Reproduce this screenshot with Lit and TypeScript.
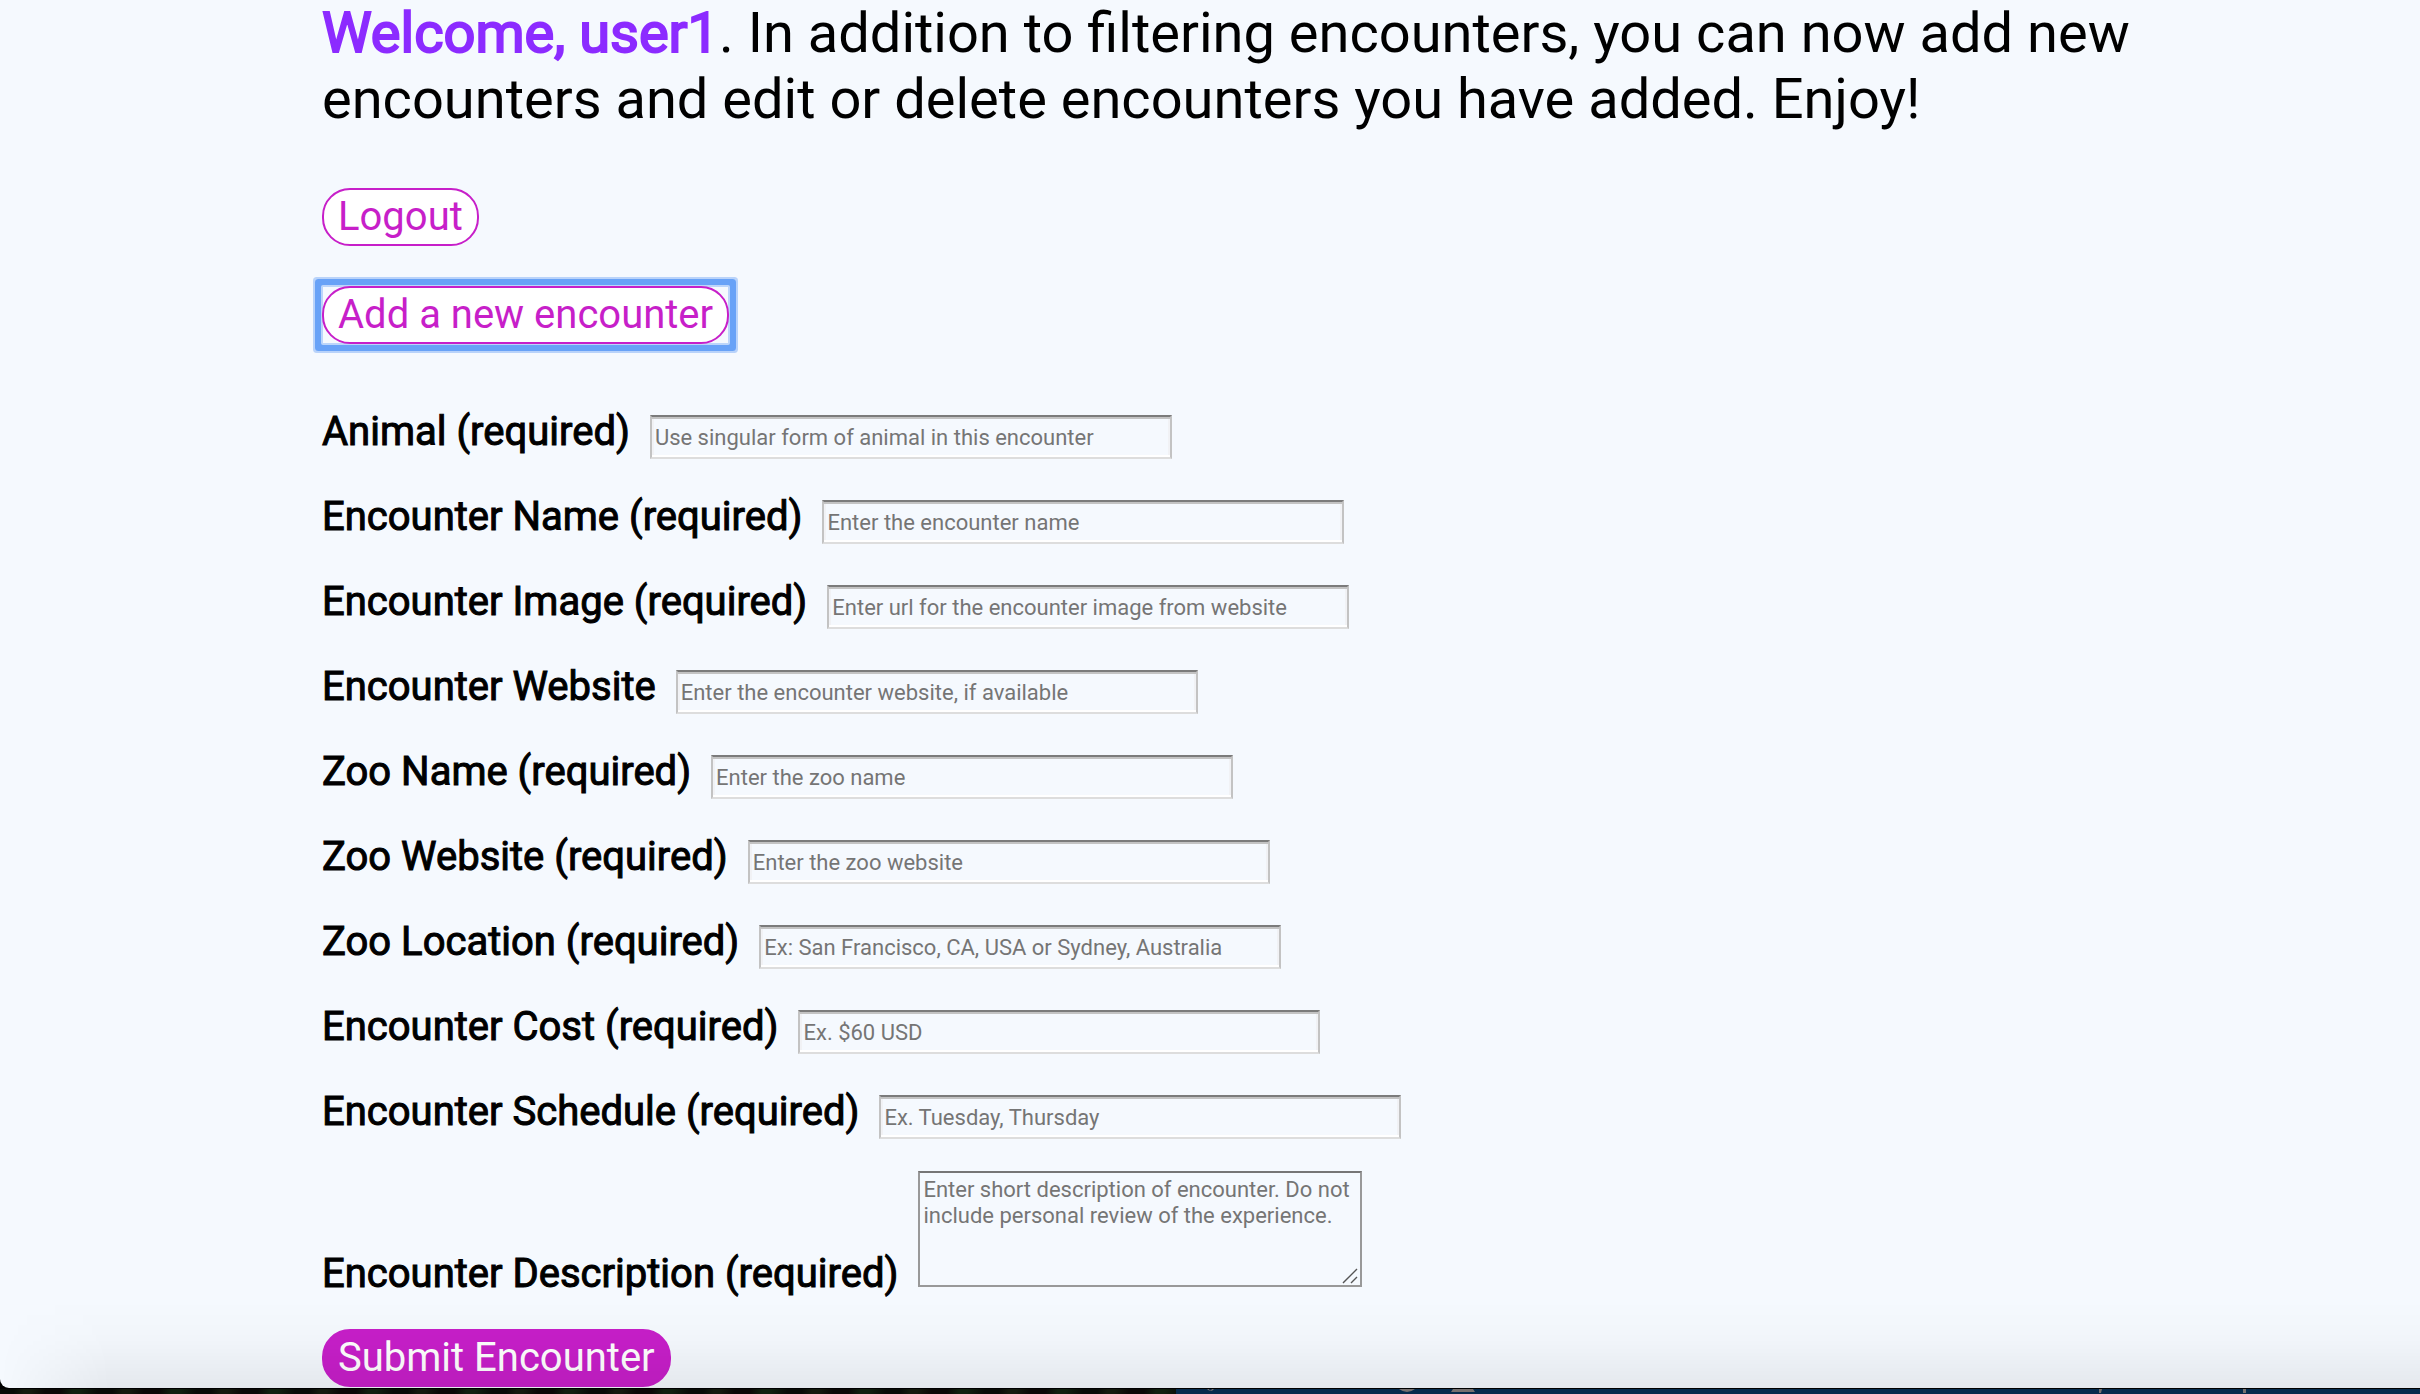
import { LitElement, html, css, svg } from "lit";
import { customElement, property } from "lit/decorators.js";

interface Field {
  id: string;
  label: string;
  placeholder: string;
}

const FIELDS: Field[] = [
  { id: "animal", label: "Animal (required)", placeholder: "Use singular form of animal in this encounter" },
  { id: "name", label: "Encounter Name (required)", placeholder: "Enter the encounter name" },
  { id: "image", label: "Encounter Image (required)", placeholder: "Enter url for the encounter image from website" },
  { id: "website", label: "Encounter Website", placeholder: "Enter the encounter website, if available" },
  { id: "zoo-name", label: "Zoo Name (required)", placeholder: "Enter the zoo name" },
  { id: "zoo-website", label: "Zoo Website (required)", placeholder: "Enter the zoo website" },
  { id: "zoo-location", label: "Zoo Location (required)", placeholder: "Ex: San Francisco, CA, USA or Sydney, Australia" },
  { id: "cost", label: "Encounter Cost (required)", placeholder: "Ex. $60 USD" },
  { id: "schedule", label: "Encounter Schedule (required)", placeholder: "Ex. Tuesday, Thursday" },
];

@customElement("encounter-form")
export class EncounterForm extends LitElement {
  static styles = css`
    :host {
      display: block;
    }
    .form {
      display: flex;
      flex-direction: column;
      align-items: flex-start;
      margin: 0;
    }
    .row {
      display: flex;
      align-items: baseline;
      gap: 20px;
      height: 51px;
      margin-bottom: 34px;
    }
    .row.tall {
      align-items: flex-end;
      height: auto;
      margin: -2px 0 32px;
    }
    .label {
      font-size: 40px;
      line-height: 47px;
      color: #000;
      -webkit-text-stroke: 1px #000;
    }
    .input,
    .textarea {
      box-sizing: border-box;
      margin: 0;
      border-radius: 0;
      background: transparent;
      font-family: inherit;
      font-size: 22px;
      line-height: 26px;
      color: #000;
      outline: none;
    }
    .input {
      width: 522px;
      height: 44px;
      padding: 8px 3px 6px;
      border: 2px solid #c3c3c3;
      border-top-color: #7b7b7b;
      border-bottom-color: #dddddd;
      box-shadow: inset 0 2px #c3c3c3, inset 0 -2px #ffffff, inset 2px 0 #f1f2f5, inset -2px 0 #f1f2f5;
    }
    .input::placeholder,
    .textarea::placeholder {
      color: #757575;
      opacity: 1;
    }
    .area {
      position: relative;
      display: flex;
      margin-bottom: 10px;
    }
    .textarea {
      width: 444px;
      height: 116px;
      padding: 4px 3px;
      border: 2px solid #999999;
      border-top-color: #767676;
      resize: none;
    }
    .grip {
      position: absolute;
      right: 4px;
      bottom: 3px;
      width: 16px;
      height: 16px;
      pointer-events: none;
    }
    .submit {
      margin: 0;
      height: 58px;
      padding: 0 14px 2px;
      border: 2px solid #c71fc9;
      border-radius: 28px;
      background: #c71fc9;
      color: #fff;
      font-family: inherit;
      font-size: 40px;
      line-height: 47px;
    }
  `;

  render() {
    return html`
      <form class="form" @submit=${(e: Event) => e.preventDefault()}>
        ${FIELDS.map(
          (f) => html`
            <div class="row">
              <label class="label" for=${f.id}>${f.label}</label>
              <input class="input" id=${f.id} type="text" placeholder=${f.placeholder} />
            </div>
          `
        )}
        <div class="row tall">
          <label class="label" for="description">Encounter Description (required)</label>
          <div class="area">
            <textarea
              class="textarea"
              id="description"
              placeholder="Enter short description of encounter. Do not include personal review of the experience."
            ></textarea>
            <svg class="grip" viewBox="0 0 16 16" aria-hidden="true">
              ${svg`<path d="M1 15 15 1M9 15 15 9" stroke="#555" stroke-width="1.4" fill="none" />`}
            </svg>
          </div>
        </div>
        <button class="submit" type="submit">Submit Encounter</button>
      </form>
    `;
  }
}

@customElement("app-root")
export class AppRoot extends LitElement {
  @property() user = "user1";

  static styles = css`
    :host {
      display: flex;
      flex-direction: column;
      height: 100vh;
      background: #000;
      font-family: Roboto, "Liberation Sans", sans-serif;
    }
    .window {
      position: relative;
      flex: 1;
      min-height: 0;
      overflow: hidden;
      border-bottom-left-radius: 9px;
      background: #f5f9fe;
    }
    .content {
      display: flex;
      flex-direction: column;
      align-items: flex-start;
      padding: 0 240px 0 322px;
    }
    .welcome {
      margin: 0 0 56px;
      font-size: 56px;
      line-height: 66px;
      font-weight: 400;
      color: #000;
    }
    .user {
      font-weight: 400;
      color: #8c2bff;
      -webkit-text-stroke: 2px #8c2bff;
    }
    .pill {
      display: block;
      height: 58px;
      margin: 0;
      padding: 0 14px 2px;
      border: 2px solid #c71fc9;
      border-radius: 28px;
      background: #fff;
      color: #c71fc9;
      font-family: inherit;
      font-size: 40px;
      line-height: 47px;
      outline: none;
    }
    .focus {
      margin: 40px 0 64px;
      border-radius: 1px;
      box-shadow: inset 0 0 0 1px #bcd5fa, 0 0 0 1px #bcd5fa, 0 0 0 7px #68a2f7, 0 0 0 9px #b9d3fa;
    }
    .shade {
      position: absolute;
      inset: auto 0 0 0;
      height: 88px;
      pointer-events: none;
      background: linear-gradient(to bottom, rgba(0, 0, 0, 0), rgba(0, 0, 0, 0.015) 45%, rgba(0, 0, 0, 0.065));
      mask-image: linear-gradient(to right, transparent, #000 110px);
    }
    .desktop {
      display: flex;
      height: 5px;
      margin-top: 1px;
    }
    .photo {
      flex: 0 0 1176px;
      background: repeating-linear-gradient(
        100deg,
        #080b07 0 14px,
        #141a0e 24px 31px,
        #0a0806 45px 60px,
        #10200f 72px 80px,
        #080b07 97px
      );
    }
    .panel {
      flex: 1;
      background: #062b4c;
    }
    .specks {
      display: block;
      width: 1244px;
      height: 5px;
    }
  `;

  render() {
    return html`
      <main class="window">
        <div class="content">
          <p class="welcome">
            <strong class="user">Welcome, ${this.user}</strong>. In addition to filtering encounters, you can now add
            new encounters and edit or delete encounters you have added. Enjoy!
          </p>
          <button class="pill" type="button">Logout</button>
          <div class="focus"><button class="pill" type="button">Add a new encounter</button></div>
          <encounter-form></encounter-form>
        </div>
        <div class="shade"></div>
      </main>
      <div class="desktop" aria-hidden="true">
        <div class="photo"></div>
        <div class="panel">
          <svg class="specks" viewBox="0 0 1244 5">
            ${svg`<g fill="#75706f">
              <path d="M31 0h2q1 3 3 0h2q-3 4-7 0z" />
              <path d="M223 0h16q-8 6-16 0z" />
              <path d="M277 0h20l2 3h-24z" />
              <path d="M923 0h3l-1 4h-2zM1067 0h3v4h-3z" />
            </g>`}
          </svg>
        </div>
      </div>
    `;
  }
}
